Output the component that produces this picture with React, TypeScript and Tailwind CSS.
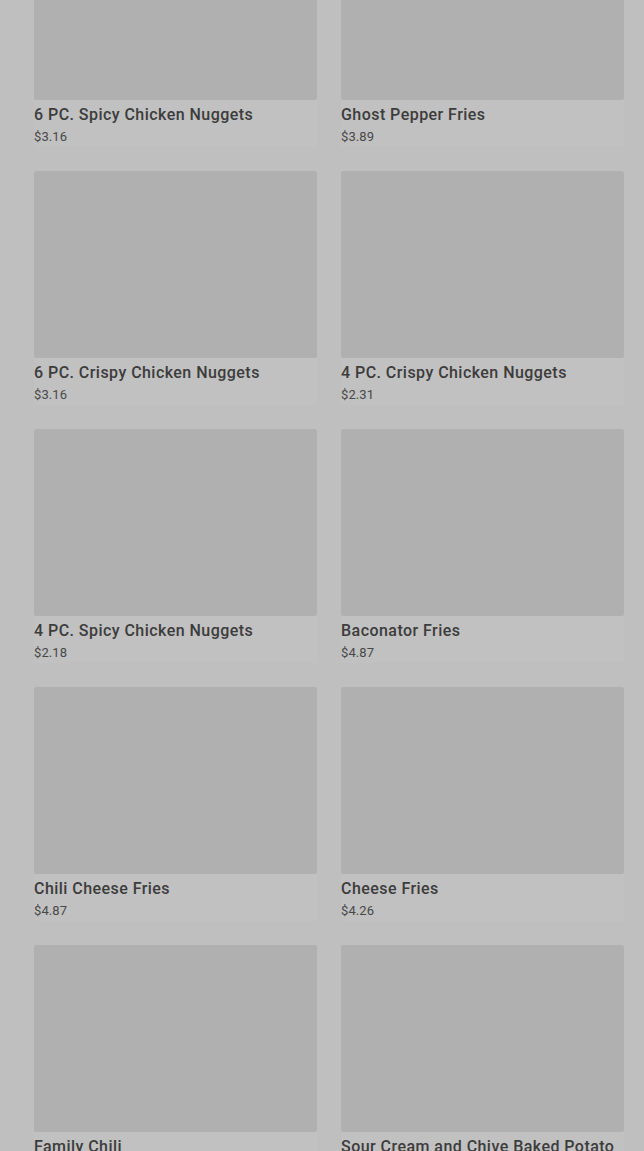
const items = [
  { name: "6 PC. Spicy Chicken Nuggets", price: "$3.16" },
  { name: "Ghost Pepper Fries", price: "$3.89" },
  { name: "6 PC. Crispy Chicken Nuggets", price: "$3.16" },
  { name: "4 PC. Crispy Chicken Nuggets", price: "$2.31" },
  { name: "4 PC. Spicy Chicken Nuggets", price: "$2.18" },
  { name: "Baconator Fries", price: "$4.87" },
  { name: "Chili Cheese Fries", price: "$4.87" },
  { name: "Cheese Fries", price: "$4.26" },
  { name: "Family Chili", price: "$8.99" },
  { name: "Sour Cream and Chive Baked Potato", price: "$3.49" },
];

function MenuCard({ name, price }: { name: string; price: string }) {
  return (
    <div className="flex flex-col bg-[#c1c1c1]">
      <div className="h-[187px] w-full rounded-[2px] bg-[#b0b0b0]" />
      <p className="mt-[3px] text-[16px] leading-[24px] font-medium text-[#3c3c3c] tracking-[0.45px] whitespace-nowrap">
        {name}
      </p>
      <p className="text-[13px] leading-[20px] text-[#484848] tracking-[0.1px]">{price}</p>
    </div>
  );
}

export default function App() {
  return (
    <div className="h-[1151px] overflow-hidden bg-[#bfbfbf] font-['Roboto',sans-serif]">
      <div className="grid grid-cols-2 gap-x-[24px] gap-y-[24px] pl-[34px] pr-[20px] mt-[-87px]">
        {items.map((item, index) => (
          <MenuCard key={index} name={item.name} price={item.price} />
        ))}
      </div>
    </div>
  );
}
